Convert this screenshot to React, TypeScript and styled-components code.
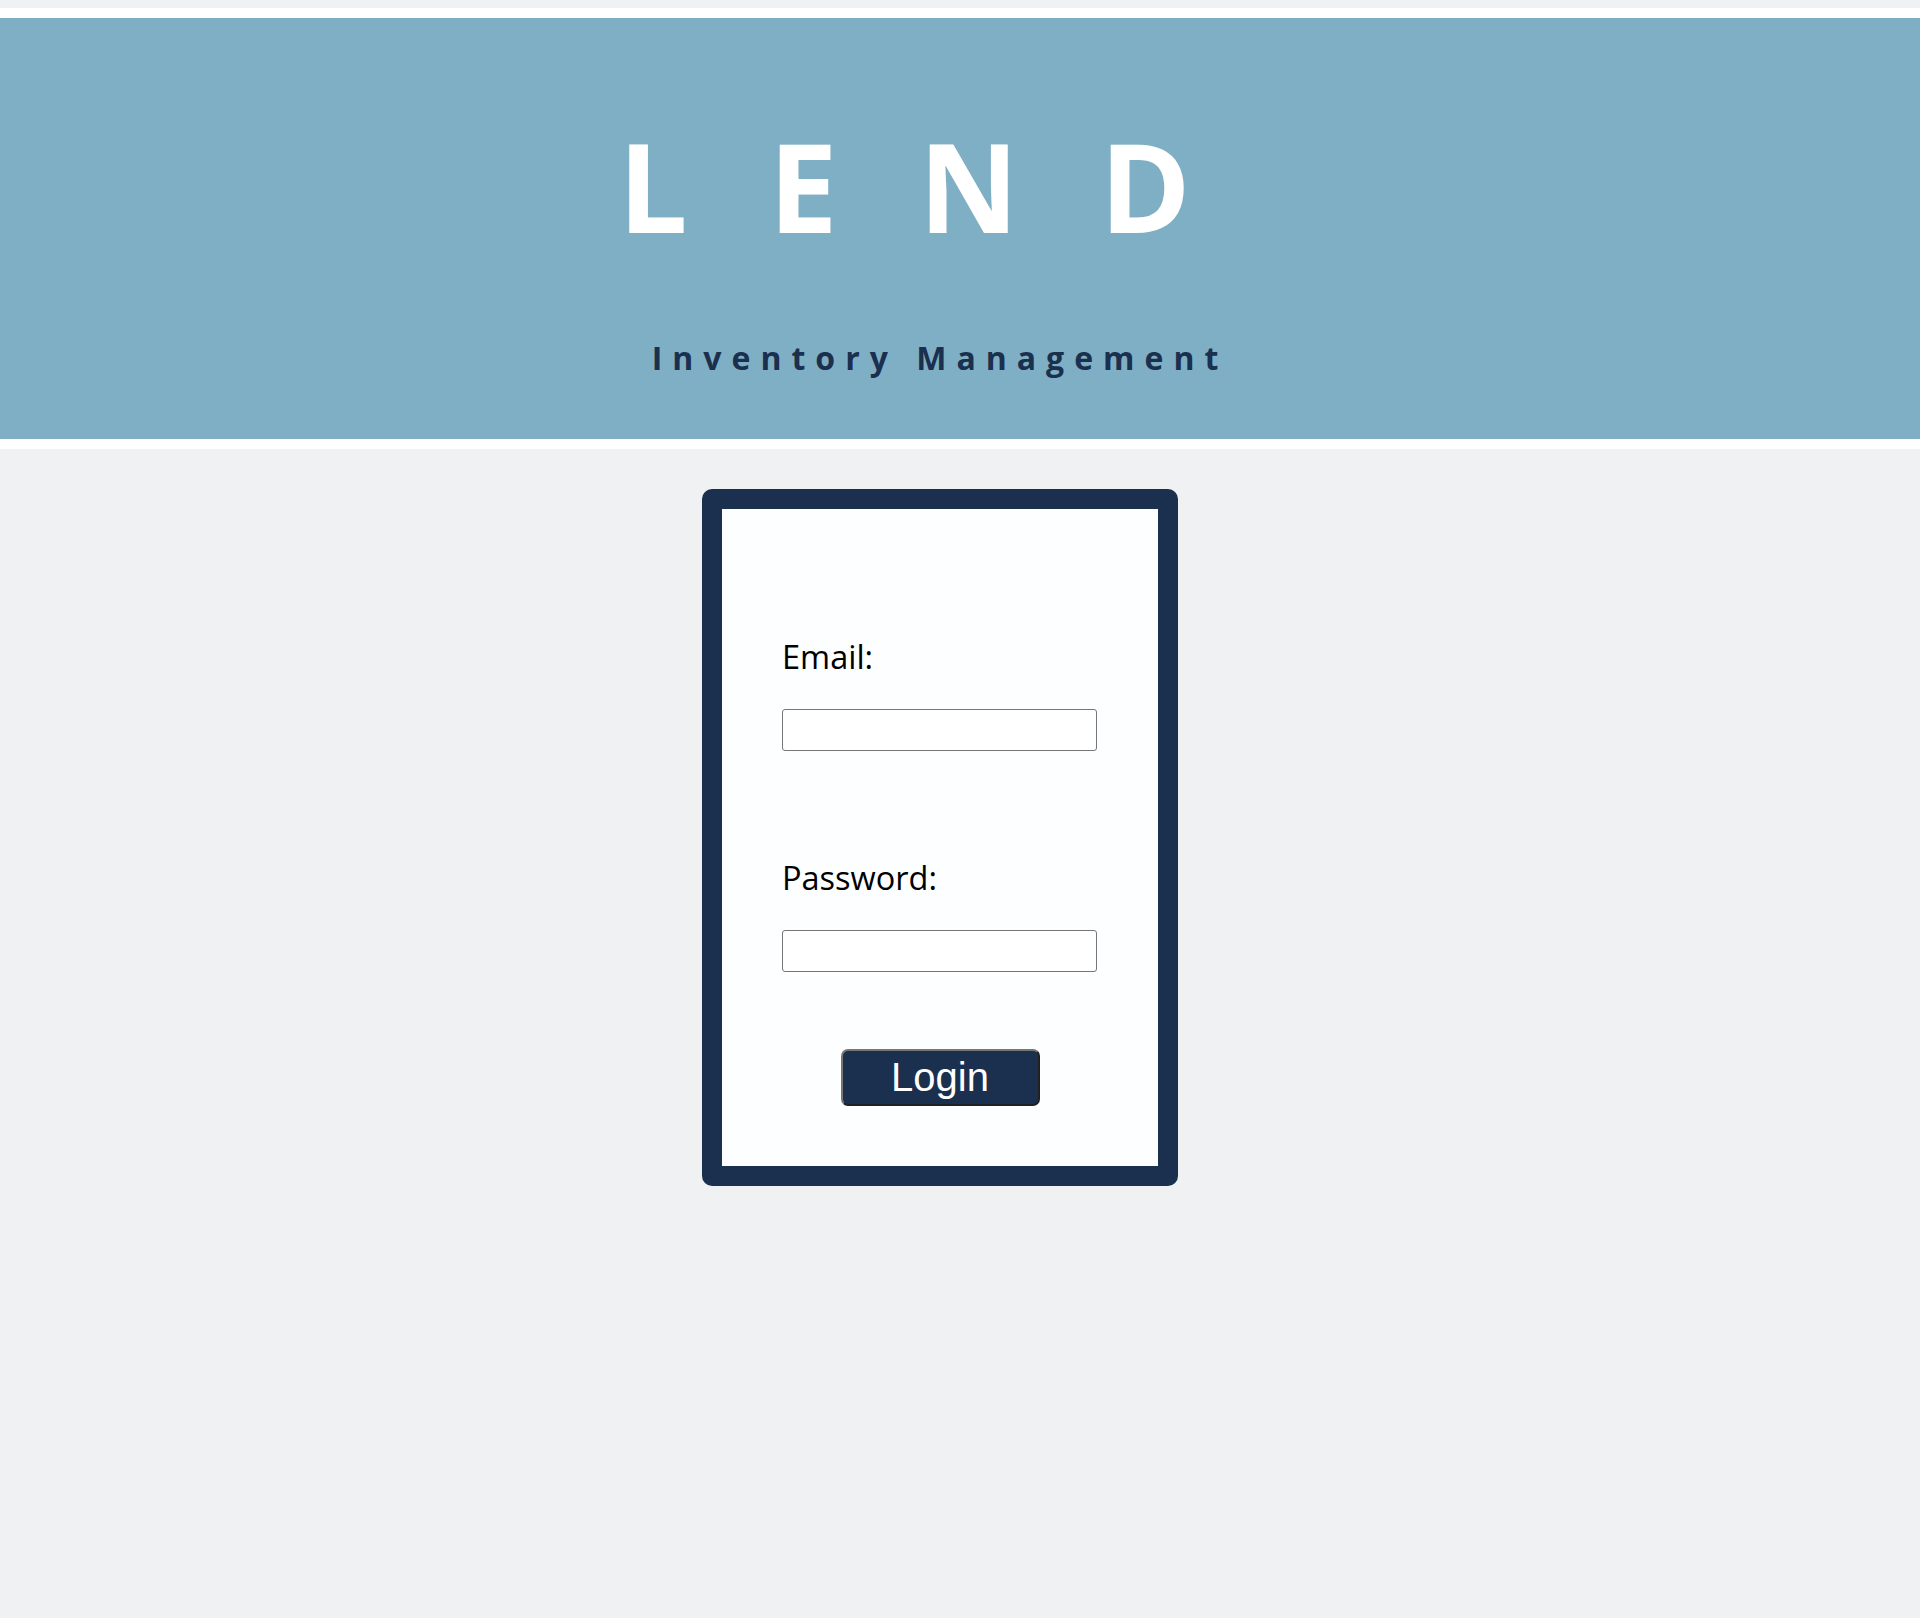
import React from "react";
import styled, { createGlobalStyle } from "styled-components";

const GlobalStyle = createGlobalStyle`
  html, body {
    margin: 0;
    padding: 0;
    background: #f0f1f3;
    min-height: 1618px;
  }
  body {
    font-family: "Open Sans", "Liberation Sans", sans-serif;
  }
`;

const Header = styled.header`
  margin-top: 8px;
  background: #7fafc4;
  border-top: 10px solid #ffffff;
  border-bottom: 10px solid #ffffff;
  padding: 84px 40px 60px 0;
  text-align: center;
`;

const Title = styled.h1`
  margin: 0;
  padding-left: 10px;
  font-family: "Open Sans", sans-serif;
  font-size: 123px;
  font-weight: 700;
  line-height: normal;
  letter-spacing: 81px;
  color: #ffffff;
`;

const Subtitle = styled.h2`
  margin: 67px 0 0;
  font-family: "Open Sans", sans-serif;
  font-size: 32px;
  font-weight: 700;
  line-height: normal;
  letter-spacing: 10px;
  color: #1b2f4e;
`;

const Main = styled.main`
  display: flex;
  justify-content: center;
  padding: 40px 40px 0 0;
`;

const Card = styled.form`
  background: #fdfeff;
  border: 20px solid #1b2f4e;
  border-radius: 10px;
  padding: 125.6px 60px 60px;
  box-sizing: content-box;
  width: 316px;
  display: flex;
  flex-direction: column;
`;

const Field = styled.div<{ $gap?: number }>`
  display: flex;
  flex-direction: column;
  margin-top: ${(p) => p.$gap ?? 0}px;
`;

const Label = styled.label`
  font-family: "Open Sans", sans-serif;
  font-size: 32.5px;
  line-height: 44px;
  color: #000000;
`;

const Input = styled.input`
  margin-top: 30px;
  width: 315px;
  height: 42px;
  box-sizing: border-box;
  border: 1px solid #767676;
  border-radius: 3px;
  background: #ffffff;
  font-size: 18px;
  padding: 0 6px;
`;

const ButtonRow = styled.div`
  display: flex;
  justify-content: center;
  margin-top: 77px;
`;

const Button = styled.button`
  width: 199px;
  height: 57px;
  box-sizing: border-box;
  padding: 3px 0;
  background: #1b2f4e;
  color: #ffffff;
  border: 2px outset #767676;
  border-radius: 7px;
  font-family: "Liberation Sans", Arial, sans-serif;
  font-size: 40px;
  line-height: normal;
  cursor: pointer;
`;

export default function App() {
  return (
    <>
      <GlobalStyle />
      <Header>
        <Title>LEND</Title>
        <Subtitle>Inventory Management</Subtitle>
      </Header>
      <Main>
        <Card onSubmit={(e) => e.preventDefault()}>
          <Field>
            <Label htmlFor="email">Email:</Label>
            <Input id="email" type="email" />
          </Field>
          <Field $gap={105}>
            <Label htmlFor="password">Password:</Label>
            <Input id="password" type="password" />
          </Field>
          <ButtonRow>
            <Button type="submit">Login</Button>
          </ButtonRow>
        </Card>
      </Main>
    </>
  );
}
